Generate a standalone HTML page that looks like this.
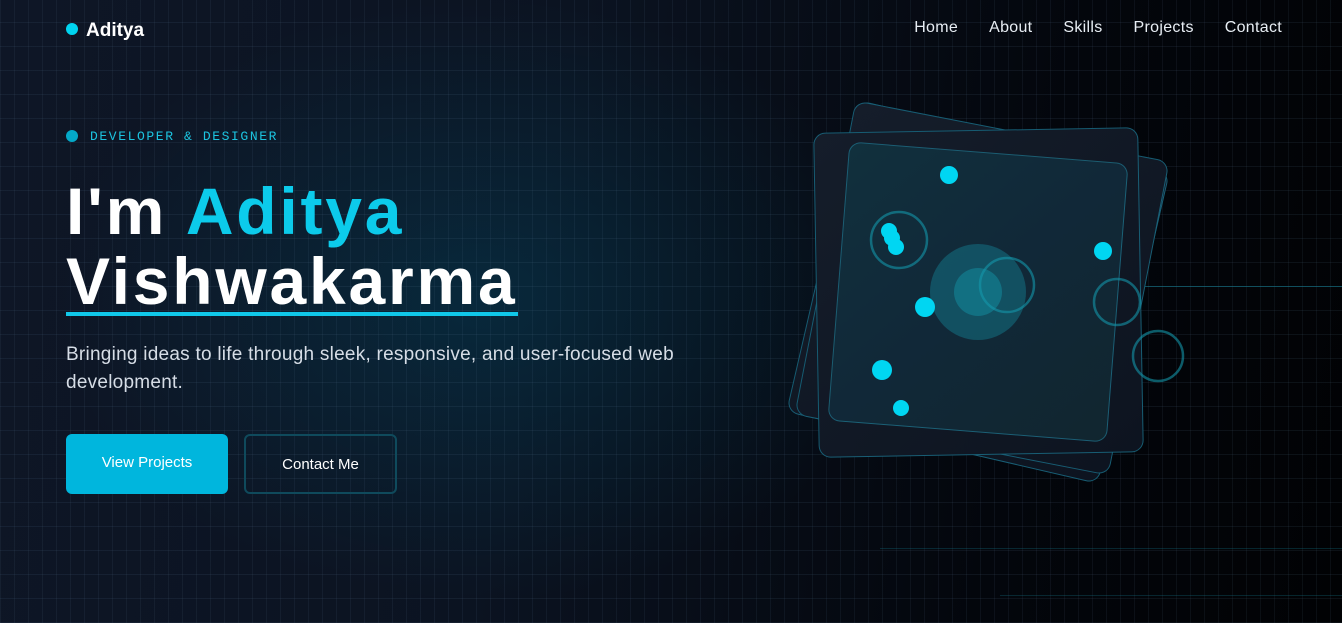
<!DOCTYPE html>
<html><head><meta charset="utf-8"><style>
*{margin:0;padding:0;box-sizing:border-box}
body{width:1342px;height:623px;overflow:hidden;position:relative;font-family:"Liberation Sans",sans-serif;
background:radial-gradient(ellipse 420px 300px at 480px 300px,rgba(0,90,120,0.3),rgba(0,0,0,0) 100%),linear-gradient(100deg,#0e1626 0%,#0b1321 40%,#03060c 75%,#010204 100%);}
.grid{position:absolute;inset:0;background-image:linear-gradient(rgba(90,120,150,0.12) 1px,transparent 1px),linear-gradient(90deg,rgba(90,120,150,0.10) 1px,transparent 1px);background-size:14px 24px;background-position:0 22px}
.nav{position:absolute;top:18px;left:66px;right:60px;height:24px}
.logo{position:absolute;left:0;top:2px;color:#fff;font-weight:bold;font-size:19px;padding-left:20px}
.logo:before{content:"";position:absolute;left:0;top:3px;width:12px;height:12px;border-radius:50%;background:#00d4f0}
.links{position:absolute;right:0;top:1px;color:#e8eef4;font-size:16px;letter-spacing:0.3px}
.links span{margin-left:31px}
.tag{position:absolute;left:66px;top:129px;font-family:"Liberation Mono",monospace;font-size:13px;letter-spacing:1.6px;color:#1cc4e0;padding-left:24px}
.tag:before{content:"";position:absolute;left:0;top:1px;width:12px;height:12px;border-radius:50%;background:#04a9c8}
h1{position:absolute;left:66px;top:176px;font-size:66px;line-height:70px;color:#fff;font-weight:bold;letter-spacing:2.8px}
h1 .c{color:#0ccbeb}
h1 .u{border-bottom:4px solid #10c8ea;display:inline-block;line-height:62px}
.sub{position:absolute;left:66px;top:341px;width:660px;font-size:19px;line-height:28px;color:#d6dde6;letter-spacing:0.25px}
.b1{position:absolute;left:66px;top:434px;width:162px;height:60px;border-radius:6px;background:#00b6dd;color:#fff;font-size:15px;text-align:center;line-height:58px}
.b2{position:absolute;left:244px;top:434px;width:153px;height:60px;border-radius:6px;border:2px solid #0f4a5c;color:#fff;font-size:15px;text-align:center;line-height:58px}
.card{position:absolute;border:1px solid rgba(30,150,180,0.55);border-radius:12px;background:linear-gradient(135deg,#151d2a,#0d1420)}
</style></head><body>
<div class="grid"></div>
<div class="nav"><div class="logo">Aditya</div><div class="links"><span>Home</span><span>About</span><span>Skills</span><span>Projects</span><span>Contact</span></div></div>
<div class="tag">DEVELOPER &amp; DESIGNER</div>
<h1>I'm <span class="c">Aditya</span><br><span class="u">Vishwakarma</span></h1>
<div class="sub">Bringing ideas to life through sleek, responsive, and user-focused web development.</div>
<div class="b1">View Projects</div>
<div class="b2">Contact Me</div>
<div style="position:absolute;left:1140px;top:286px;width:202px;height:1px;background:rgba(20,120,140,0.6)"></div>
<div style="position:absolute;left:880px;top:548px;width:462px;height:1px;background:rgba(20,120,140,0.3)"></div>
<div style="position:absolute;left:1000px;top:595px;width:342px;height:1px;background:rgba(20,120,140,0.3)"></div>
<div class="card" style="left:818px;top:132px;width:320px;height:320px;transform:rotate(13deg)"></div>
<div class="card" style="left:822px;top:128px;width:320px;height:320px;transform:rotate(11deg)"></div>
<div class="card" style="left:816px;top:130px;width:325px;height:325px;transform:rotate(-1deg)"></div>
<div class="card" style="left:838px;top:152px;width:280px;height:280px;transform:rotate(4.5deg);background:linear-gradient(135deg,#11303d,#112838 50%,#11262f);border-color:rgba(40,160,190,0.45)"></div>
<svg width="1342" height="623" style="position:absolute;left:0;top:0">
<circle cx="978" cy="292" r="48" fill="rgba(20,140,160,0.4)"/>
<circle cx="978" cy="292" r="24" fill="rgba(20,150,170,0.45)"/>
<g fill="none" stroke="rgba(20,150,170,0.6)" stroke-width="2.5">
<circle cx="1007" cy="285" r="27"/><circle cx="899" cy="240" r="28"/><circle cx="1117" cy="302" r="23"/><circle cx="1158" cy="356" r="25"/></g>
<g fill="#00d6f2">
<circle cx="949" cy="175" r="9"/><circle cx="889" cy="231" r="8"/><circle cx="892" cy="238" r="8"/><circle cx="896" cy="247" r="8"/>
<circle cx="1103" cy="251" r="9"/><circle cx="925" cy="307" r="10"/><circle cx="882" cy="370" r="10"/><circle cx="901" cy="408" r="8"/></g>
</svg>
</body></html>
